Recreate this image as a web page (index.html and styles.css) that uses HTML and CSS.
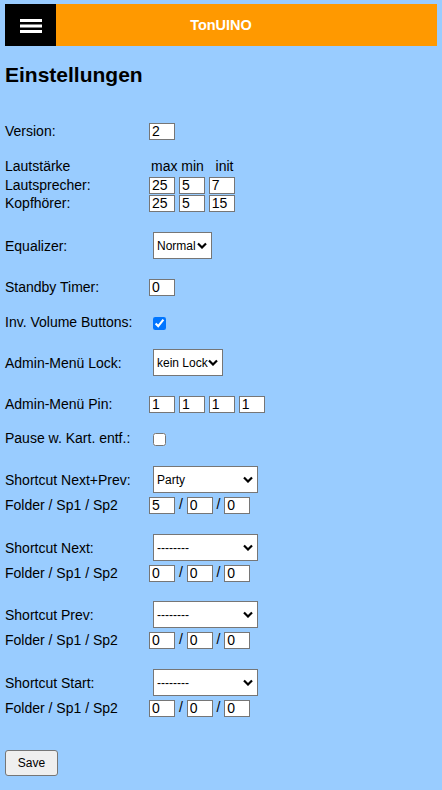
FILE: index.html
```html
<!DOCTYPE html>
<html lang="de">
<head>
    <meta charset="UTF-8">
    <title>TonUINO - Einstellungen</title>
    <link rel="stylesheet" href="styles.css">
</head>
<body>
    <header class="topbar">
        <div class="menu-btn">
            <svg width="22" height="14" viewBox="0 0 22 14">
                <rect x="0" y="0" width="22" height="3" fill="#fff"/>
                <rect x="0" y="5.5" width="22" height="3" fill="#fff"/>
                <rect x="0" y="11" width="22" height="3" fill="#fff"/>
            </svg>
        </div>
        <div class="brand">TonUINO</div>
    </header>

    <h1>Einstellungen</h1>

    <form class="settings" onsubmit="event.preventDefault();">
        <div class="row first">
            <label class="lbl" for="version">Version:</label>
            <div class="ctl"><input type="text" id="version" value="2"></div>
        </div>

        <div class="group mt17">
            <div class="row">
                <span class="lbl">Lautstärke</span>
                <div class="ctl cols">max min&nbsp;&nbsp; init</div>
            </div>
            <div class="row sub1">
                <label class="lbl" for="spk_max">Lautsprecher:</label>
                <div class="ctl">
                    <input type="text" id="spk_max" value="25">
                    <input type="text" id="spk_min" value="5">
                    <input type="text" id="spk_init" value="7">
                </div>
            </div>
            <div class="row">
                <label class="lbl" for="hp_max">Kopfhörer:</label>
                <div class="ctl">
                    <input type="text" id="hp_max" value="25">
                    <input type="text" id="hp_min" value="5">
                    <input type="text" id="hp_init" value="15">
                </div>
            </div>
        </div>

        <div class="row sel-row mt20">
            <label class="lbl" for="eq">Equalizer:</label>
            <div class="ctl">
                <span class="select-wrap">
                    <select id="eq" class="sel-eq">
                        <option>Normal</option>
                        <option>Pop</option>
                        <option>Rock</option>
                        <option>Jazz</option>
                        <option>Classic</option>
                        <option>Bass</option>
                    </select>
                    <svg class="chevron" width="10" height="7" viewBox="0 0 10 7"><polyline points="1,1.5 5,5.5 9,1.5" fill="none" stroke="#000" stroke-width="2.2"/></svg>
                </span>
            </div>
        </div>

        <div class="row mt19">
            <label class="lbl" for="standby">Standby Timer:</label>
            <div class="ctl"><input type="text" id="standby" value="0"></div>
        </div>

        <div class="row chk-row mt17">
            <label class="lbl" for="inv_vol">Inv. Volume Buttons:</label>
            <div class="ctl"><input type="checkbox" id="inv_vol" checked></div>
        </div>

        <div class="row sel-row mt18">
            <label class="lbl" for="lock">Admin-Menü Lock:</label>
            <div class="ctl">
                <span class="select-wrap">
                    <select id="lock" class="sel-lock">
                        <option>kein Lock</option>
                        <option>Karte</option>
                        <option>Pin</option>
                        <option>Rechnen</option>
                    </select>
                    <svg class="chevron" width="10" height="7" viewBox="0 0 10 7"><polyline points="1,1.5 5,5.5 9,1.5" fill="none" stroke="#000" stroke-width="2.2"/></svg>
                </span>
            </div>
        </div>

        <div class="row mt19">
            <label class="lbl" for="pin1">Admin-Menü Pin:</label>
            <div class="ctl">
                <input type="text" id="pin1" value="1">
                <input type="text" id="pin2" value="1">
                <input type="text" id="pin3" value="1">
                <input type="text" id="pin4" value="1">
            </div>
        </div>

        <div class="row chk-row mt16">
            <label class="lbl" for="pause_rm">Pause w. Kart. entf.:</label>
            <div class="ctl"><input type="checkbox" id="pause_rm"></div>
        </div>

        <div class="group mt19">
            <div class="row sel-row">
                <label class="lbl" for="sc_np">Shortcut Next+Prev:</label>
                <div class="ctl">
                    <span class="select-wrap">
                        <select id="sc_np" class="sel-sc">
                            <option>Party</option>
                            <option>--------</option>
                        </select>
                        <svg class="chevron" width="10" height="7" viewBox="0 0 10 7"><polyline points="1,1.5 5,5.5 9,1.5" fill="none" stroke="#000" stroke-width="2.2"/></svg>
                    </span>
                </div>
            </div>
            <div class="row sub3">
                <span class="lbl">Folder / Sp1 / Sp2</span>
                <div class="ctl"><input type="text" value="5"> / <input type="text" value="0"> / <input type="text" value="0"></div>
            </div>
        </div>

        <div class="group mt20">
            <div class="row sel-row">
                <label class="lbl" for="sc_next">Shortcut Next:</label>
                <div class="ctl">
                    <span class="select-wrap">
                        <select id="sc_next" class="sel-sc">
                            <option>--------</option>
                            <option>Party</option>
                        </select>
                        <svg class="chevron" width="10" height="7" viewBox="0 0 10 7"><polyline points="1,1.5 5,5.5 9,1.5" fill="none" stroke="#000" stroke-width="2.2"/></svg>
                    </span>
                </div>
            </div>
            <div class="row sub3">
                <span class="lbl">Folder / Sp1 / Sp2</span>
                <div class="ctl"><input type="text" value="0"> / <input type="text" value="0"> / <input type="text" value="0"></div>
            </div>
        </div>

        <div class="group mt19">
            <div class="row sel-row">
                <label class="lbl" for="sc_prev">Shortcut Prev:</label>
                <div class="ctl">
                    <span class="select-wrap">
                        <select id="sc_prev" class="sel-sc">
                            <option>--------</option>
                            <option>Party</option>
                        </select>
                        <svg class="chevron" width="10" height="7" viewBox="0 0 10 7"><polyline points="1,1.5 5,5.5 9,1.5" fill="none" stroke="#000" stroke-width="2.2"/></svg>
                    </span>
                </div>
            </div>
            <div class="row sub3">
                <span class="lbl">Folder / Sp1 / Sp2</span>
                <div class="ctl"><input type="text" value="0"> / <input type="text" value="0"> / <input type="text" value="0"></div>
            </div>
        </div>

        <div class="group mt20">
            <div class="row sel-row">
                <label class="lbl" for="sc_start">Shortcut Start:</label>
                <div class="ctl">
                    <span class="select-wrap">
                        <select id="sc_start" class="sel-sc">
                            <option>--------</option>
                            <option>Party</option>
                        </select>
                        <svg class="chevron" width="10" height="7" viewBox="0 0 10 7"><polyline points="1,1.5 5,5.5 9,1.5" fill="none" stroke="#000" stroke-width="2.2"/></svg>
                    </span>
                </div>
            </div>
            <div class="row sub3">
                <span class="lbl">Folder / Sp1 / Sp2</span>
                <div class="ctl"><input type="text" value="0"> / <input type="text" value="0"> / <input type="text" value="0"></div>
            </div>
        </div>

        <button type="submit" class="save-btn">Save</button>
    </form>
</body>
</html>
```

FILE: styles.css
```css
body {
    margin: 0;
    padding: 4px 5px 10px;
    background-color: #99ccff;
    font-family: "Liberation Sans", Arial, sans-serif;
    font-size: 14px;
    color: #000;
}
.topbar {
    display: flex;
    height: 42px;
    background-color: #ff9900;
}
.menu-btn {
    width: 51px;
    flex: none;
    background-color: #000;
    display: flex;
    justify-content: center;
    align-items: center;
}
.menu-btn svg {
    margin-top: 2px;
}
.brand {
    flex: 1;
    padding-right: 51px;
    text-align: center;
    line-height: 42px;
    color: #fff;
    font-weight: bold;
    font-size: 14.5px;
}
h1 {
    margin: 17px 0 0;
    font-size: 21px;
    line-height: 24px;
}
.settings {
    display: flex;
    flex-direction: column;
}
.row {
    display: flex;
    align-items: center;
    height: 18px;
}
.lbl {
    width: 144px;
    flex: none;
    line-height: 16px;
}
.ctl {
    line-height: 16px;
    white-space: nowrap;
}
.cols {
    padding-left: 2px;
}
.row.first { margin-top: 35px; }
.sub1 { margin-top: 1px; }
.sub3 { margin-top: 3px; }
.mt16 { margin-top: 16px; }
.mt17 { margin-top: 17px; }
.mt18 { margin-top: 18px; }
.mt19 { margin-top: 19px; }
.mt20 { margin-top: 20px; }
.sel-row {
    height: 27px;
}
.chk-row {
    height: 18px;
}
input[type="text"] {
    box-sizing: border-box;
    width: 26px;
    height: 17px;
    margin: 0;
    padding: 0 2px;
    border: 1px solid #767676;
    background-color: #fff;
    font-family: "Liberation Sans", Arial, sans-serif;
    font-size: 14px;
    color: #000;
    vertical-align: middle;
}
input[type="checkbox"] {
    margin: 0 0 0 4px;
    width: 13px;
    height: 13px;
    vertical-align: middle;
}
.select-wrap {
    position: relative;
    display: inline-block;
    margin-left: 4px;
    vertical-align: middle;
}
select {
    display: block;
    box-sizing: border-box;
    height: 27px;
    margin: 0;
    padding: 0 14px 0 3px;
    border: 1px solid #767676;
    border-radius: 0;
    background-color: #fff;
    font-family: "Liberation Sans", Arial, sans-serif;
    font-size: 12px;
    color: #000;
    appearance: none;
    -webkit-appearance: none;
}
.chevron {
    position: absolute;
    right: 5px;
    top: 10px;
    pointer-events: none;
}
.sel-eq { width: 59px; }
.sel-lock { width: 70px; }
.sel-sc { width: 105px; }
.save-btn {
    align-self: flex-start;
    margin-top: 33px;
    width: 53px;
    height: 26px;
    padding: 0;
    border: 1px solid #767676;
    border-radius: 3px;
    background-color: #efefef;
    font-family: "Liberation Sans", Arial, sans-serif;
    font-size: 12px;
    color: #000;
    cursor: pointer;
}
.save-btn:hover {
    background-color: #e5e5e5;
}
```
